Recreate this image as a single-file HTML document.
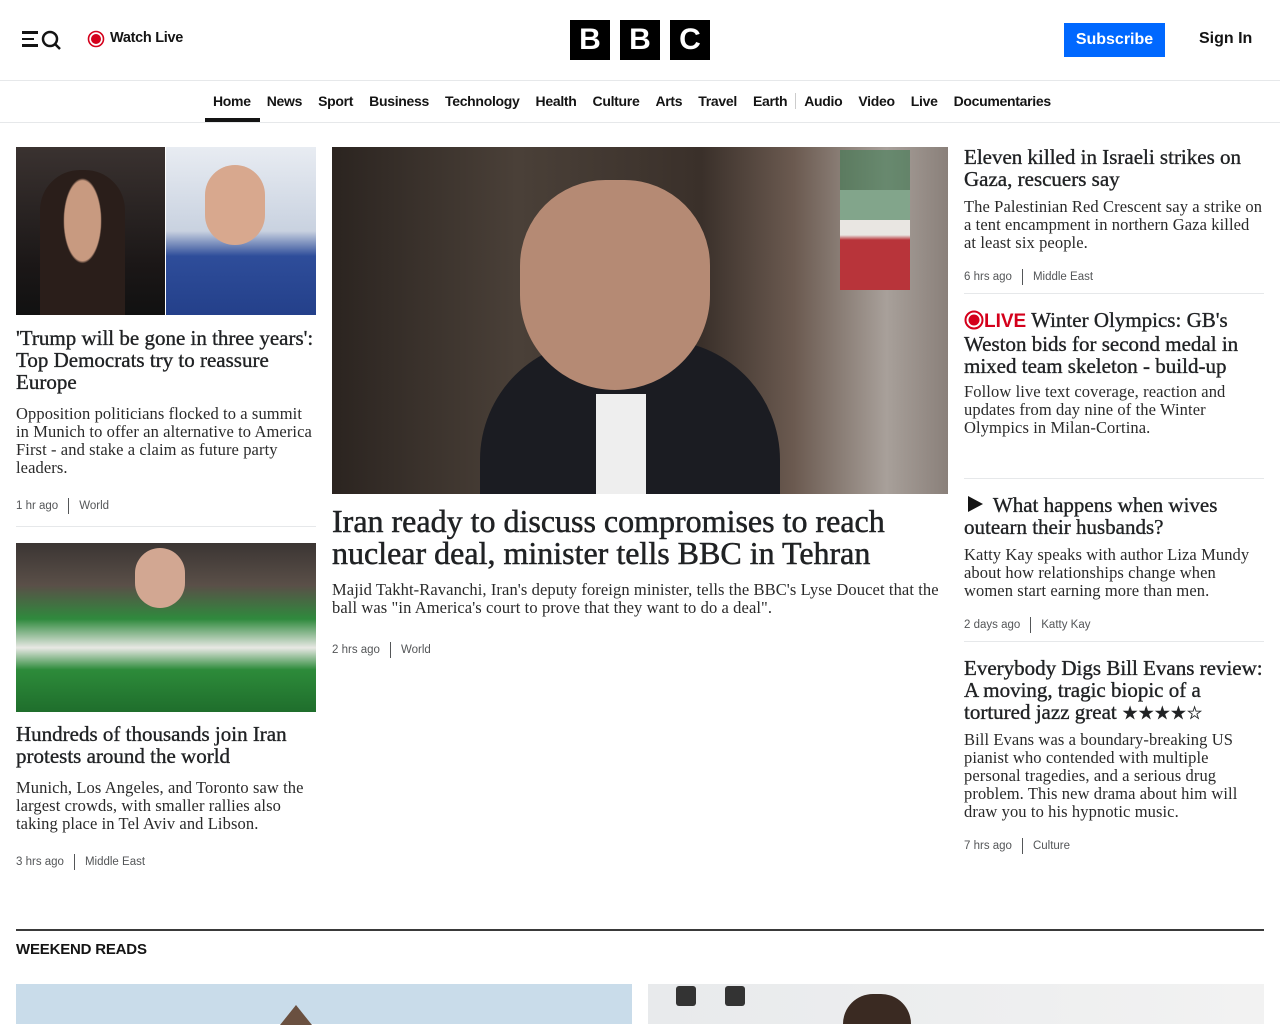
<!DOCTYPE html>
<html><head><meta charset="utf-8"><style>
*{margin:0;padding:0;box-sizing:border-box}
body{width:1280px;height:1024px;overflow:hidden;background:#fff;font-family:"Liberation Sans",sans-serif;color:#141414;position:relative}
.a{position:absolute}
.h{font-family:"Liberation Serif",serif;font-size:21px;line-height:22px;color:#202224;white-space:nowrap;-webkit-text-stroke:0.35px #202224}
.p{font-family:"Liberation Serif",serif;font-size:16.5px;line-height:18px;color:#2a2a2a;white-space:nowrap;letter-spacing:0.1px}
.m{font-size:11.5px;color:#545658;white-space:nowrap}
.m span{display:inline-block;width:1px;height:16px;background:#545658;vertical-align:middle;margin:0 10px}
.rule{height:1px;background:#e6e8ea}
nav a{font-size:14px;letter-spacing:-0.3px;color:#141414;text-decoration:none;font-weight:bold}
</style></head><body>
<div class="a" style="left:22px;top:31px;width:16px">
<div style="height:2.5px;background:#141414;margin-bottom:4px"></div><div style="height:2.5px;background:#141414;margin-bottom:4px;width:12px"></div><div style="height:2.5px;background:#141414"></div></div>
<svg class="a" style="left:41px;top:30px" width="22" height="20"><circle cx="9" cy="9" r="7" fill="none" stroke="#141414" stroke-width="2.5"/><line x1="14" y1="14" x2="19" y2="19" stroke="#141414" stroke-width="2.5"/></svg>
<svg class="a" style="left:87px;top:30px" width="18" height="18"><circle cx="9" cy="9" r="7.5" fill="none" stroke="#d4001b" stroke-width="1.6"/><circle cx="9" cy="9" r="5" fill="#d4001b"/></svg>
<div class="a" style="left:110px;top:30px;font-size:14.5px;font-weight:bold;letter-spacing:-0.3px">Watch Live</div>
<div class="a" style="left:570px;top:20px;display:flex;gap:10px">
<div style="width:40px;height:40px;background:#000;color:#fff;font-weight:bold;font-size:30px;text-align:center;line-height:40px">B</div>
<div style="width:40px;height:40px;background:#000;color:#fff;font-weight:bold;font-size:30px;text-align:center;line-height:40px">B</div>
<div style="width:40px;height:40px;background:#000;color:#fff;font-weight:bold;font-size:30px;text-align:center;line-height:40px">C</div></div>
<div class="a" style="left:1064px;top:23px;width:101px;height:34px;background:#0068ff;color:#fff;font-size:16px;font-weight:bold;text-align:center;line-height:34px">Subscribe</div>
<div class="a" style="left:1199px;top:30px;font-size:16px;font-weight:bold">Sign In</div>
<div class="a rule" style="left:0;top:80px;width:1280px"></div>
<nav class="a" style="left:205px;top:93px;display:flex;gap:16px;white-space:nowrap">
<a style="margin-left:8px">Home</a><a>News</a><a>Sport</a><a>Business</a><a>Technology</a><a>Health</a><a>Culture</a><a>Arts</a><a>Travel</a><a>Earth</a><a style="border-left:1px solid #ccc;padding-left:8px;margin-left:-8px">Audio</a><a>Video</a><a>Live</a><a>Documentaries</a></nav>
<div class="a" style="left:205px;top:118px;width:55px;height:4px;background:#141414"></div>
<div class="a rule" style="left:0;top:122px;width:1280px"></div>

<div class="a" style="left:16px;top:147px;width:149px;height:168px;background:linear-gradient(180deg,#3a3230,#1b1717 70%,#111)"></div>
<div class="a" style="left:40px;top:170px;width:85px;height:145px;border-radius:40px 40px 0 0;background:radial-gradient(ellipse at 50% 35%,#c89a80 0 30%,#2a1e1a 32%)"></div>
<div class="a" style="left:166px;top:147px;width:150px;height:168px;background:linear-gradient(180deg,#e8ecf2,#c9d2e0 50%,#2e4d9a 65%,#24408a)"></div>
<div class="a" style="left:205px;top:165px;width:60px;height:80px;border-radius:30px;background:#d8a88e"></div>
<div class="a h" style="left:16px;top:327px">'Trump will be gone in three years':<br>Top Democrats try to reassure<br>Europe</div>
<div class="a p" style="left:16px;top:405px">Opposition politicians flocked to a summit<br>in Munich to offer an alternative to America<br>First - and stake a claim as future party<br>leaders.</div>
<div class="a m" style="left:16px;top:498px">1 hr ago<span></span>World</div>
<div class="a rule" style="left:16px;top:526px;width:300px"></div>
<div class="a" style="left:16px;top:543px;width:300px;height:169px;background:linear-gradient(180deg,#3b3533 0,#5a4f48 25%,#2f8a3d 45%,#e8e8e4 62%,#2d8b3a 75%,#1f6e2c)"></div>
<div class="a" style="left:135px;top:548px;width:50px;height:60px;border-radius:25px;background:#d2a792"></div>
<div class="a h" style="left:16px;top:723px">Hundreds of thousands join Iran<br>protests around the world</div>
<div class="a p" style="left:16px;top:779px">Munich, Los Angeles, and Toronto saw the<br>largest crowds, with smaller rallies also<br>taking place in Tel Aviv and Libson.</div>
<div class="a m" style="left:16px;top:854px">3 hrs ago<span></span>Middle East</div>

<div class="a" style="left:332px;top:147px;width:616px;height:347px;background:linear-gradient(90deg,#2b2420,#4a4038 30%,#3a302a 60%,#6b5a50 75%,#a8a09a 90%,#8a807a)"></div>
<div class="a" style="left:840px;top:190px;width:70px;height:100px;background:linear-gradient(180deg,#e9e6e2 45%,#b8343a 50%)"></div>
<div class="a" style="left:840px;top:150px;width:70px;height:70px;background:#3d7a52;opacity:.6"></div>
<div class="a" style="left:480px;top:340px;width:300px;height:154px;border-radius:120px 120px 0 0;background:#1b1c22"></div>
<div class="a" style="left:520px;top:180px;width:190px;height:210px;border-radius:90px 90px 100px 100px;background:#b58a74"></div>
<div class="a" style="left:596px;top:394px;width:50px;height:100px;background:#eee"></div>
<div class="a h" style="left:332px;top:505px;font-size:32px;line-height:32px;-webkit-text-stroke:0.5px #202224">Iran ready to discuss compromises to reach<br>nuclear deal, minister tells BBC in Tehran</div>
<div class="a p" style="left:332px;top:581px">Majid Takht-Ravanchi, Iran's deputy foreign minister, tells the BBC's Lyse Doucet that the<br>ball was "in America's court to prove that they want to do a deal".</div>
<div class="a m" style="left:332px;top:642px">2 hrs ago<span></span>World</div>

<div class="a h" style="left:964px;top:146px">Eleven killed in Israeli strikes on<br>Gaza, rescuers say</div>
<div class="a p" style="left:964px;top:198px">The Palestinian Red Crescent say a strike on<br>a tent encampment in northern Gaza killed<br>at least six people.</div>
<div class="a m" style="left:964px;top:269px">6 hrs ago<span></span>Middle East</div>
<div class="a rule" style="left:964px;top:293px;width:300px"></div>
<div class="a h" style="left:964px;top:309px"><svg width="20" height="20" style="vertical-align:-3px"><circle cx="10" cy="10" r="8.5" fill="none" stroke="#d4001b" stroke-width="2"/><circle cx="10" cy="10" r="5.5" fill="#d4001b"/></svg><b style="font-family:'Liberation Sans',sans-serif;color:#d4001b;font-size:19px;-webkit-text-stroke:0">LIVE</b> Winter Olympics: GB's<br>Weston bids for second medal in<br>mixed team skeleton - build-up</div>
<div class="a p" style="left:964px;top:383px">Follow live text coverage, reaction and<br>updates from day nine of the Winter<br>Olympics in Milan-Cortina.</div>
<div class="a rule" style="left:964px;top:478px;width:300px"></div>
<div class="a h" style="left:964px;top:494px"><svg width="24" height="18" style="vertical-align:-1px"><path d="M4 1 L19 9 L4 17Z" fill="#141414"/></svg> What happens when wives<br>outearn their husbands?</div>
<div class="a p" style="left:964px;top:546px">Katty Kay speaks with author Liza Mundy<br>about how relationships change when<br>women start earning more than men.</div>
<div class="a m" style="left:964px;top:617px">2 days ago<span></span>Katty Kay</div>
<div class="a rule" style="left:964px;top:641px;width:300px"></div>
<div class="a h" style="left:964px;top:657px">Everybody Digs Bill Evans review:<br>A moving, tragic biopic of a<br>tortured jazz great <span style="font-size:18px">★★★★☆</span></div>
<div class="a p" style="left:964px;top:731px">Bill Evans was a boundary-breaking US<br>pianist who contended with multiple<br>personal tragedies, and a serious drug<br>problem. This new drama about him will<br>draw you to his hypnotic music.</div>
<div class="a m" style="left:964px;top:838px">7 hrs ago<span></span>Culture</div>

<div class="a" style="left:16px;top:929px;width:1248px;height:2px;background:#3a3a3a"></div>
<div class="a" style="left:16px;top:941px;font-size:15px;font-weight:bold;letter-spacing:-0.2px">WEEKEND READS</div>
<div class="a" style="left:16px;top:984px;width:616px;height:40px;background:#c9dcea"></div>
<div class="a" style="left:280px;top:1005px;width:0;height:0;border-left:16px solid transparent;border-right:16px solid transparent;border-bottom:20px solid #6a5040"></div>
<div class="a" style="left:648px;top:984px;width:616px;height:40px;background:linear-gradient(90deg,#e8eaec,#f2f2f2)"></div>
<div class="a" style="left:676px;top:986px;width:20px;height:20px;background:#333;border-radius:3px"></div>
<div class="a" style="left:725px;top:986px;width:20px;height:20px;background:#333;border-radius:3px"></div>
<div class="a" style="left:843px;top:994px;width:68px;height:30px;border-radius:34px 34px 0 0;background:#3a2a22"></div>
</body></html>
